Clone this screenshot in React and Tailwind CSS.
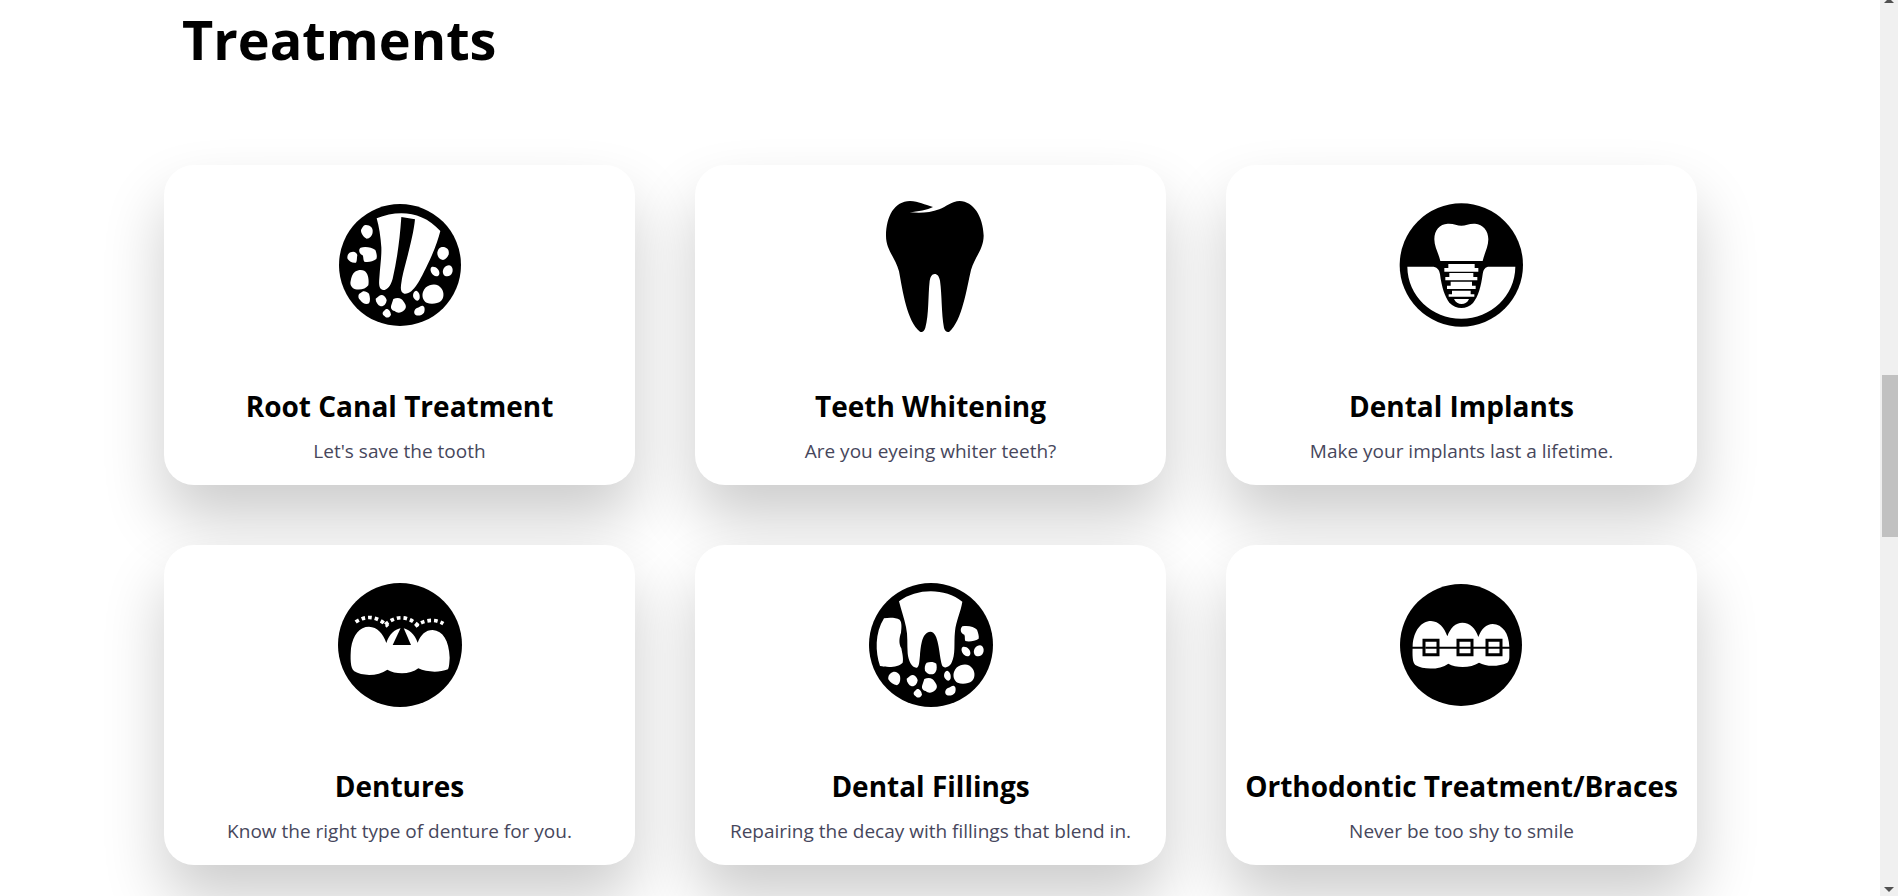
const Svg = ({ children }) => (
  <svg viewBox="0 0 450 450" className="h-[150px] w-[150px]" fill="#fff" aria-hidden="true">
    {children}
  </svg>
);

const LowerStones = () => (
  <>
    <path d="M320 231 C332 228 345 240 343 252 C341 260 332 261 325 255 C318 250 313 237 320 231Z" />
    <path d="M372 226 C381 227 385 237 382 247 C379 257 368 262 359 257 C352 252 352 241 357 234 C361 229 366 226 372 226Z" />
    <path d="M314 286 C328 280 342 284 350 296 C358 308 357 324 348 333 C338 341 318 344 305 338 C294 333 290 318 294 306 C298 295 305 289 314 286Z" />
    <path d="M273 302 C281 304 286 314 284 325 C281 334 274 334 268 326 C261 319 264 305 273 302Z" />
    <path d="M163 317 C172 312 182 319 185 330 C184 341 177 350 167 349 C158 345 152 336 152 326Z" />
    <path d="M205 327 C219 320 231 325 235 334 C243 344 246 353 238 360 C228 369 218 371 209 363 C199 361 196 354 199 345Z" />
    <path d="M293 347 C300 349 300 360 297 368 C291 376 279 379 272 375 C264 369 268 357 276 354 C282 353 286 347 293 347Z" />
    <path d="M183 357 C190 355 197 364 198 374 C194 383 184 386 179 379 C171 374 172 368 176 364Z" />
  </>
);

const RootCanalIcon = () => (
  <Svg>
    <circle cx="225" cy="225" r="183" fill="#000" />
    <path d="M155 85 C218 59 292 62 346 123 C339 151 327 185 306 227 C287 266 265 314 238 311 C224 307 227 290 230 272 C235 237 264 151 270 88 L229 81 C224 152 216 210 203 266 C197 287 188 300 174 300 C160 297 162 278 163 264 C166 224 170 196 169 172 C167 140 162 110 155 85Z" />
    <path d="M121 105 C135 104 145 113 143 126 C142 138 134 146 125 146 C116 142 107 130 108 120 C112 113 115 106 121 105Z" />
    <path d="M107 173 C121 168 140 172 151 180 C155 190 157 201 154 207 C144 214 130 218 118 215 C114 210 116 201 113 196 C101 192 100 177 107 173Z" />
    <path d="M77 187 C86 182 95 187 97 195 C95 203 97 212 93 218 C82 220 74 215 68 207 C65 199 69 190 77 187Z" />
    <path d="M90 245 C104 237 119 239 125 250 C131 259 132 277 130 286 C123 296 108 301 91 298 C80 294 74 284 77 273 C79 261 82 251 90 245Z" />
    <path d="M112 305 C119 302 127 307 132 311 C135 320 137 332 132 340 C125 345 112 341 106 331 C99 325 99 318 102 312Z" />
    <path d="M348 172 C357 169 370 174 371 184 C374 197 364 207 354 210 C342 208 336 198 337 187 C339 179 342 174 348 172Z" />
    <LowerStones />
  </Svg>
);

const ToothIcon = () => (
  <Svg>
    <path
      fill="#000"
      transform="translate(12 0)"
      d="M150 33 C177 34 193 44 219 51 C202 60 174 64 149 67 C178 70 210 69 238 58 C258 50 276 34 299 33 C340 34 369 78 371 137 C370 180 345 199 333 240 C320 296 306 393 268 425 C262 428 255 424 252 414 C244 369 246 315 240 272 C237 258 232 252 224 252 C215 253 211 260 209 273 C204 316 207 374 196 413 C192 424 187 428 180 425 C141 395 128 303 117 244 C106 202 78 180 78 137 C79 78 103 34 150 33Z"
    />
  </Svg>
);

const ImplantIcon = () => (
  <Svg>
    <g transform="translate(-2 0)">
      <circle cx="225" cy="225" r="185" fill="#000" />
      <path d="M162 213 C157 190 144 171 144 148 C144 120 160 102 184 101 C202 100 212 107 225 107 C238 107 249 100 266 101 C290 103 306 121 306 148 C306 171 294 190 289 213Z" />
      <path d="M63 230 H137 C151 230 159 238 161 253 C166 292 176 321 189 338 C209 359 240 360 260 339 C276 320 284 289 289 253 C291 238 297 230 309 230 H387 C386 318 314 386 225 386 C136 386 64 318 63 230Z" />
      <path d="M186 222 H265 V234 H276 V245 H174 V234 H186Z M189 249 H261 V261 H273 V271 H177 V261 H189Z M193 275 H257 V287 H268 V297 H182 V287 H193Z M197 302 H253 V313 H264 V320 H187 V313 H197Z M203 327 H248 C241 346 212 348 203 327Z" />
    </g>
  </Svg>
);

const DenturesIcon = () => (
  <Svg>
    <circle cx="225" cy="225" r="186" fill="#000" />
    <path d="M78 235 C84 194 104 170 132 170 C157 171 174 190 184 219 C193 193 209 176 231 175 C252 176 269 193 278 218 C287 194 302 180 323 180 C354 182 372 212 374 263 C373 278 373 289 369 298 C340 309 304 306 280 295 C256 314 212 314 187 299 C160 319 112 319 88 304 C75 296 76 262 78 235Z" />
    <path fill="#000" d="M227 174 L203 225 H258 L236 174Z" />
    <g fill="none" stroke="#fff" strokeWidth="11">
      <path strokeDasharray="11 9" d="M92 156 C120 137 153 135 189 169" />
      <path strokeDasharray="11 9" d="M181 164 C210 137 247 134 282 169" />
      <path strokeDasharray="11 9" d="M271 169 C293 151 328 144 355 161" />
    </g>
  </Svg>
);

const FillingIcon = () => (
  <Svg>
    <circle cx="225" cy="225" r="186" fill="#000" />
    <path d="M129 94 C184 54 267 54 319 95 C315 124 300 152 297 184 C293 222 300 253 286 280 C279 293 263 297 258 286 C248 250 249 186 223 185 C199 187 195 222 192 256 C190 274 190 289 183 293 C168 295 157 273 155 250 C153 224 156 197 150 171 C145 145 135 119 129 94Z" />
    <path d="M84 145 C99 142 119 142 131 149 C139 158 136 176 135 188 C129 205 128 221 136 235 C139 250 143 268 140 278 C126 294 92 292 72 288 C58 247 56 190 84 145Z" />
    <path d="M319 169 C337 165 355 171 363 179 C366 188 370 199 368 206 C357 213 340 216 328 213 C325 207 328 199 325 194 C312 190 312 176 319 169Z" />
    <path d="M212 278 C222 275 234 275 241 281 C243 293 243 304 234 311 C224 316 213 311 207 302 C205 292 207 283 212 278Z" />
    <path d="M111 306 C120 304 129 310 132 318 C134 330 132 341 123 346 C112 344 103 338 97 328 C95 318 102 309 111 306Z" />
    <LowerStones />
  </Svg>
);

const BracesIcon = () => (
  <Svg>
    <g transform="translate(-3 0)">
      <circle cx="225" cy="225" r="183" fill="#000" />
      <path d="M80 226 C83 182 106 153 135 153 C159 154 175 173 184 199 C193 173 209 158 229 158 C252 158 269 175 277 201 C286 177 301 162 320 162 C350 163 369 191 370 230 V262 C370 270 368 275 364 278 C336 291 300 290 279 278 C256 294 211 295 187 281 C161 300 112 300 88 285 C79 278 79 257 80 226Z" />
      <g fill="none" stroke="#000">
        <path strokeWidth="6" d="M78 233 H113 M158 233 H214 M260 233 H302 M346 233 H372 M118 233 H153 M219 233 H255 M306 233 H342" />
        <path strokeWidth="9" d="M114 211 H156 V254 H114Z M216 211 H258 V254 H216Z M303 211 H345 V254 H303Z" />
      </g>
    </g>
  </Svg>
);

const treatments = [
  { title: "Root Canal Treatment", text: "Let's save the tooth", Icon: RootCanalIcon },
  { title: "Teeth Whitening", text: "Are you eyeing whiter teeth?", Icon: ToothIcon },
  { title: "Dental Implants", text: "Make your implants last a lifetime.", Icon: ImplantIcon },
  { title: "Dentures", text: "Know the right type of denture for you.", Icon: DenturesIcon },
  { title: "Dental Fillings", text: "Repairing the decay with fillings that blend in.", Icon: FillingIcon },
  { title: "Orthodontic Treatment/Braces", text: "Never be too shy to smile", Icon: BracesIcon },
];

const TreatmentCard = ({ title, text, Icon }) => (
  <article className="flex h-80 flex-col items-center rounded-[30px] bg-white pt-[25px] text-center shadow-[0_34px_62px_rgba(0,0,0,0.2)]">
    <Icon />
    <h2 className="mt-[46px] text-[28px] leading-10 font-bold whitespace-nowrap text-black">{title}</h2>
    <p className="mt-[9px] text-[19px] leading-8 text-[#47475c]">{text}</p>
  </article>
);

const Scrollbar = () => (
  <div className="flex w-[18px] shrink-0 flex-col items-center justify-between bg-[#f0f0f0]" aria-hidden="true">
    <svg width="10" height="3" viewBox="0 0 10 3" fill="#505050"><path d="M3 0 H7 L10 3 H0Z" /></svg>
    <div className="mt-[372px] h-[162px] w-4 self-end bg-[#c1c1c1]" />
    <div className="flex grow items-end pb-1">
      <svg width="10" height="5" viewBox="0 0 10 5" fill="#505050"><path d="M0 0 H10 L5 5Z" /></svg>
    </div>
  </div>
);

export default function App() {
  return (
    <div className="flex h-screen overflow-hidden bg-white font-['Open_Sans','Noto_Sans',sans-serif]">
      <main className="min-w-0 grow pr-[183px] pl-[164px]">
        <h1 className="pl-[18px] text-[54px] leading-[78px] font-bold text-black">Treatments</h1>
        <section className="mt-[87px] grid grid-cols-3 gap-[60px]">
          {treatments.map((item) => (
            <TreatmentCard key={item.title} {...item} />
          ))}
        </section>
      </main>
      <Scrollbar />
    </div>
  );
}
